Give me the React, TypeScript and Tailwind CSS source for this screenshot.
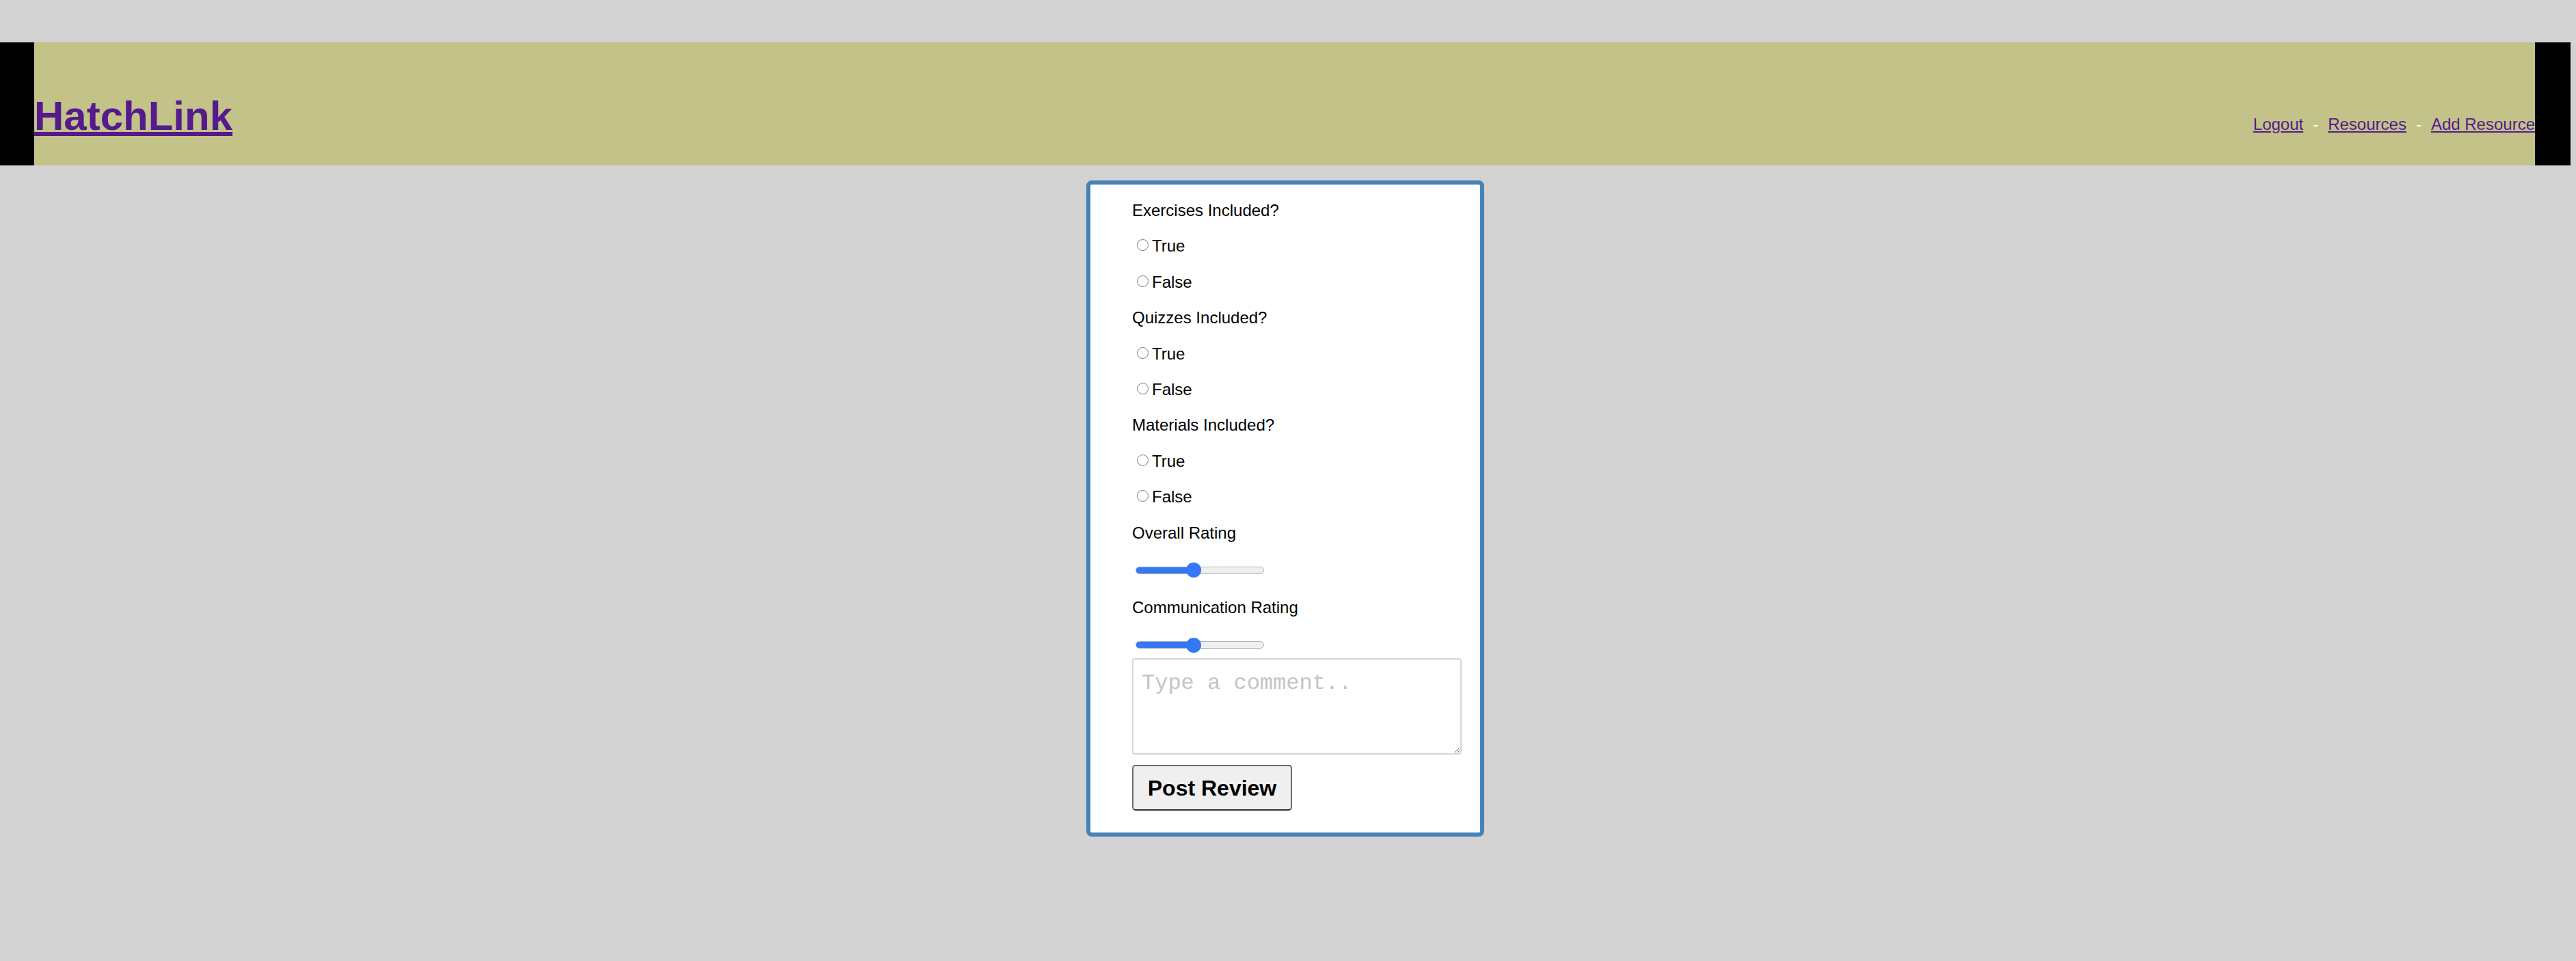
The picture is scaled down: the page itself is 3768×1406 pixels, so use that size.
import React, { useState } from "react";

// --- Helpers ---
const RATING_MIN = 1;
const RATING_MAX = 10;

type YesNo = "true" | "false" | "";

function RadioGroup({
  label,
  name,
  value,
  onChange,
}: {
  label: string;
  name: string;
  value: YesNo;
  onChange: (v: YesNo) => void;
}) {
  return (
    <>
      <p className="leading-[27px]">{label}</p>
      {(["true", "false"] as const).map((opt) => (
        <label key={opt} className="flex items-start leading-[27px]">
          <input
            type="radio"
            name={name}
            checked={value === opt}
            onChange={() => onChange(opt)}
            className="ml-[7px] mr-[5px] mt-[4px] h-[17px] w-[17px] appearance-none rounded-full border-[1.5px] border-[#7a7a7a] bg-white checked:border-[5px] checked:border-[#3478f6]"
          />
          {opt === "true" ? "True" : "False"}
        </label>
      ))}
    </>
  );
}

function RatingSlider({ value, onChange }: { value: number; onChange: (v: number) => void }) {
  // remplissage bleu jusqu'au centre du curseur
  const pct = (value - RATING_MIN) / (RATING_MAX - RATING_MIN);
  const stop = 11 + pct * 166;
  return (
    <div className="flex h-[22px] items-center">
      <input
        type="range"
        min={RATING_MIN}
        max={RATING_MAX}
        value={value}
        onChange={(e) => onChange(Number(e.target.value))}
        className="ml-[5px] h-[11px] w-[188px] appearance-none rounded-full border border-[#b2b2b2] [&::-webkit-slider-thumb]:h-[22px] [&::-webkit-slider-thumb]:w-[22px] [&::-webkit-slider-thumb]:appearance-none [&::-webkit-slider-thumb]:rounded-full [&::-webkit-slider-thumb]:bg-[#3478f6]"
        style={{ background: `linear-gradient(to right, #3478f6 ${stop}px, #efefef ${stop}px)` }}
      />
    </div>
  );
}

export default function App() {
  const [exercises, setExercises] = useState<YesNo>("");
  const [quizzes, setQuizzes] = useState<YesNo>("");
  const [materials, setMaterials] = useState<YesNo>("");
  const [overall, setOverall] = useState(5);
  const [communication, setCommunication] = useState(5);
  const [comment, setComment] = useState("");

  return (
    <div className="min-h-screen bg-[#d3d3d3] pb-10 pt-[62px] font-['Liberation_Sans',Arial,sans-serif]">
      <div className="mr-[8px]">
        {/* Header */}
        <header className="flex h-[180px]">
          <div className="w-[50px] bg-black" />
          <div className="flex flex-1 items-baseline justify-between bg-[#c2c289] pt-[78px]">
            <a href="#" className="text-[60px] font-bold leading-none text-[#551a8b] underline">
              HatchLink
            </a>
            <nav className="flex items-baseline gap-[14px] text-[24px] text-[#551a8b]">
              <a href="#" className="underline">
                Logout
              </a>
              <span className="text-white">-</span>
              <a href="#" className="underline">
                Resources
              </a>
              <span className="text-white">-</span>
              <a href="#" className="underline">
                Add Resource
              </a>
            </nav>
          </div>
          <div className="w-[52px] bg-black" />
        </header>

        {/* Formulaire d'avis */}
        <form
          onSubmit={(e) => e.preventDefault()}
          className="mx-auto mt-[22px] w-[582px] rounded-[8px] border-[6px] border-[#4682b4] bg-white pb-[32px] pl-[61px] pt-[24px] text-[24px] text-black"
        >
          <div className="flex flex-col gap-[25.4px]">
            <RadioGroup label="Exercises Included?" name="exercises" value={exercises} onChange={setExercises} />
            <RadioGroup label="Quizzes Included?" name="quizzes" value={quizzes} onChange={setQuizzes} />
            <RadioGroup label="Materials Included?" name="materials" value={materials} onChange={setMaterials} />
            <p className="leading-[27px]">Overall Rating</p>
          </div>
          <div className="mt-[30.6px]">
            <RatingSlider value={overall} onChange={setOverall} />
          </div>
          <p className="mt-[29.8px] leading-[27px]">Communication Rating</p>
          <div className="mt-[30.9px]">
            <RatingSlider value={communication} onChange={setCommunication} />
          </div>

          <textarea
            value={comment}
            onChange={(e) => setComment(e.target.value)}
            placeholder="Type a comment.."
            className="mt-[8px] block h-[141px] w-[482px] rounded-[4px] border-2 border-[#d6d6d6] px-[12px] pt-[11px] font-['Liberation_Mono',monospace] text-[32px] leading-normal placeholder:text-[#c4c4c4]"
          />

          <button
            type="submit"
            className="mt-[15.4px] block h-[67px] w-[234px] rounded-[5px] border-2 border-[#6b6b6b] border-b-[#333333] bg-[#efefef] text-center text-[32px] font-bold"
          >
            Post Review
          </button>
        </form>
      </div>
    </div>
  );
}
